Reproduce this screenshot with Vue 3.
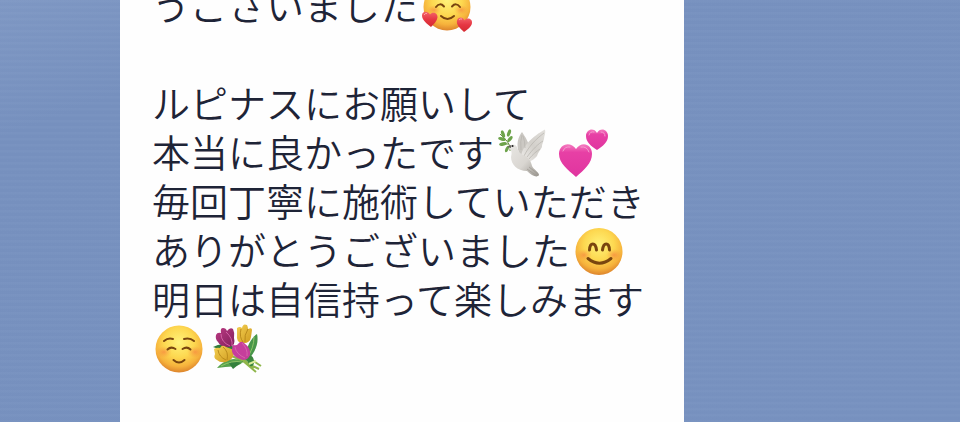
<template>
  <main class="chat">
    <!-- Shared emoji colours -->
    <svg class="emoji-defs" aria-hidden="true">
      <defs>
        <radialGradient id="face" cx="50%" cy="36%" r="64%">
          <stop offset="0" stop-color="#fff27a" />
          <stop offset="0.5" stop-color="#fdd850" />
          <stop offset="0.8" stop-color="#f6b23c" />
          <stop offset="1" stop-color="#dd842c" />
        </radialGradient>
        <radialGradient id="cheek">
          <stop offset="0" stop-color="#f4683b" stop-opacity="0.5" />
          <stop offset="1" stop-color="#f4883b" stop-opacity="0" />
        </radialGradient>
        <linearGradient id="red" x1="0" y1="0" x2="0" y2="1">
          <stop offset="0" stop-color="#f4646a" />
          <stop offset="0.5" stop-color="#e63743" />
          <stop offset="1" stop-color="#d52a31" />
        </linearGradient>
        <linearGradient id="pink" x1="0" y1="0" x2="0" y2="1">
          <stop offset="0" stop-color="#f57cc0" />
          <stop offset="0.25" stop-color="#e740a5" />
          <stop offset="1" stop-color="#e0349f" />
        </linearGradient>
        <linearGradient id="feather" x1="0" y1="1" x2="1" y2="0">
          <stop offset="0" stop-color="#f0eeeb" />
          <stop offset="0.5" stop-color="#d3d0cb" />
          <stop offset="1" stop-color="#e2e0dc" />
        </linearGradient>
        <linearGradient id="body" x1="0" y1="0" x2="1" y2="1">
          <stop offset="0" stop-color="#e9e7e4" />
          <stop offset="0.55" stop-color="#d9d6d1" />
          <stop offset="1" stop-color="#98948d" />
        </linearGradient>
        <linearGradient id="plum" x1="0" y1="0" x2="1" y2="1">
          <stop offset="0" stop-color="#bb3a83" />
          <stop offset="1" stop-color="#81205b" />
        </linearGradient>
        <linearGradient id="gold" x1="0" y1="0" x2="1" y2="1">
          <stop offset="0" stop-color="#f4d052" />
          <stop offset="1" stop-color="#cf9a1e" />
        </linearGradient>
      </defs>
    </svg>

    <article class="bubble">
      <p v-for="(line, i) in lines" :key="i" class="line">
        <template v-for="(part, j) in line" :key="j">
          <span v-if="part.text" class="text">{{ part.text }}</span>
          <svg v-else class="emoji" viewBox="0 0 57 49" role="img" :aria-label="part.emoji">
            <!-- smiling face with hearts -->
            <g v-if="part.emoji === 'hearts-face'">
              <circle cx="29" cy="25" r="23.5" fill="url(#face)" />
              <ellipse cx="16" cy="28" rx="7" ry="5" fill="url(#cheek)" />
              <ellipse cx="43" cy="28" rx="7" ry="5" fill="url(#cheek)" />
              <g class="ink">
                <path d="M18 25Q22 20 26 24.500M34 24.500Q38 20 42 25" />
                <path d="M23 34Q29.500 40 36 34" />
              </g>
              <g fill="url(#red)">
                <path d="M13 45C9 42 4 38 4 33.500C4 29 9.500 28.500 12 32.500C14.500 29 20 31 19.500 35.500C19 39 16 42 13 45Z" />
                <path d="M46 50C42 46 38 43 39 38.500C40 34.500 45 34.500 46.500 38.500C49 35 54.500 36.500 54 41C53.500 45 49 48 46 50Z" />
              </g>
              <path d="M6 33Q7 31 9 31.500M41 38Q42 36.500 44 37" stroke="#ffa5a4" stroke-width="1" fill="none" />
            </g>

            <!-- dove with olive branch -->
            <g v-else-if="part.emoji === 'dove'">
              <path d="M16 22Q17 15 10 9Q8 7 6 5M15 15L8 15" stroke="#6c9147" stroke-width="1" fill="none" />
              <g fill="#6da34b">
                <ellipse cx="15" cy="4" rx="1.700" ry="3.800" transform="rotate(20 15 4)" />
                <ellipse cx="9" cy="5" rx="1.700" ry="3.800" transform="rotate(-20 9 5)" />
                <ellipse cx="8" cy="10" rx="3.900" ry="1.700" transform="rotate(14 8 10)" />
                <ellipse cx="16" cy="10" rx="1.700" ry="3.600" transform="rotate(38 16 10)" />
                <ellipse cx="9" cy="15" rx="3.900" ry="1.700" transform="rotate(-12 9 15)" />
                <ellipse cx="13" cy="20" rx="1.500" ry="3.500" transform="rotate(25 13 20)" />
              </g>
              <path d="M25 24C22 15 24 8 28 3C31 8 35 12 36 22L30 31Z" fill="#cbc8c3" />
              <path d="M27 29C27 18 39 7 51 .500C52 4 50 7 50 10C49 14 48 15 48 18C46 22 44 23 43 27C40 31 37 31 35 34Z" fill="url(#feather)" />
              <path d="M30 27C35 17 42 10 50 4M33 28C39 20 44 15 49 12M35 30C39 25 43 22 46 20M27 21Q26 12 28 6M31 19Q31 12 29 7" stroke="#b6b3ae" stroke-width="0.700" fill="none" />
              <path d="M15 19C15 15 21 14 23 18C24 21 25 24 29 26C34 28 37 32 38 37C40 41 45 43 45 46C43 49 38 47 33 42C23 42 17 35 17 28C18 24 18 22 15 19Z" fill="url(#body)" />
              <path d="M33 40L43 47M35 38L44 45" stroke="#a09c95" stroke-width="0.800" />
              <path d="M17 16L13 18L17 19Z" fill="#66625e" />
              <circle cx="18.500" cy="17" r="1.100" fill="#222" />
            </g>

            <!-- two hearts -->
            <g v-else-if="part.emoji === 'two-hearts'">
              <path d="M25 48C17 41 8 34 8 25C8 14 20 12 25 20C30 12 41 14 41 25C41 34 33 41 25 48Z" fill="url(#pink)" />
              <path d="M46 21C40 17 35 13 35 7C35 0 43-2 46 4C49-2 57 0 57 7C57 13 52 17 46 21Z" fill="url(#pink)" />
              <path d="M12 22Q14 17 19 18M30 18Q36 17 38 23M38 6Q39 2 43 3M50 3Q54 3 54 7" stroke="#f79bd0" stroke-width="1" stroke-linecap="round" fill="none" />
            </g>

            <!-- smiling face with smiling eyes -->
            <g v-else-if="part.emoji === 'smile'">
              <circle cx="29" cy="24.500" r="23.500" fill="url(#face)" />
              <ellipse cx="14" cy="28" rx="8" ry="6" fill="url(#cheek)" />
              <ellipse cx="44" cy="28" rx="8" ry="6" fill="url(#cheek)" />
              <g class="ink thick">
                <path d="M19.500 23C20 15 25.500 15 26.500 23M32.500 23C33.500 15 39 15 39.500 23" />
                <path d="M18 31.500Q29.500 41 41 31.500" />
              </g>
            </g>

            <!-- relaxed face -->
            <g v-else-if="part.emoji === 'relaxed'">
              <circle cx="27" cy="24" r="23.500" fill="url(#face)" />
              <ellipse cx="12" cy="27" rx="8" ry="6" fill="url(#cheek)" />
              <ellipse cx="43" cy="27" rx="8" ry="6" fill="url(#cheek)" />
              <g class="ink">
                <path d="M12 16Q16 12.500 21 14M32 14Q38 12.500 42 16" />
                <path d="M15.500 24.500Q19 21 23.500 24M30.500 24Q35 21 38.500 24.500" />
                <path d="M21.500 35Q27 40 32.500 35" />
              </g>
            </g>

            <!-- bouquet -->
            <g v-else>
              <path d="M23 31L50 44M27 30L47 47M34 29L52 41M23 25L45 43" stroke="#8fb64b" stroke-width="2" fill="none" />
              <path d="M35 34C38 20 43 12 48 9C50 17 47 27 38 36Z" fill="#48964a" />
              <path d="M37 34C40 29 45 29 45 38Q44 42 41 41Z" fill="#3c863e" />
              <path d="M8 43C17 33 27 32 34 37C28 43 20 41 8 43Z" fill="#57a24c" />
              <path d="M19 37L34 36L24 44Z" fill="#34803d" />
              <path d="M4 22Q14 16 27 23L24 29Z" fill="#327c3b" />
              <path d="M45 12Q45 23 38 33M12 41Q23 35 33 37" stroke="#a2cf70" stroke-width="0.800" fill="none" />
              <path d="M7 10Q8 7 12 8Q11 3 14 3Q17 3 18 6Q21 2 24 4Q26 8 25 13Q27 20 21 22Q12 23 9 17Q6 14 7 10Z" fill="url(#plum)" />
              <path d="M28 3Q31 1 33 3Q34-2 38 0Q39 2 39 4Q43 2 43 5L42 12Q41 19 33 18Q27 17 28 10Z" fill="url(#gold)" />
              <path d="M5 24Q8 22 11 23Q13 19 17 22L25 25Q26 34 17 37Q11 38 8 35Q4 33 6 29Z" fill="url(#gold)" />
              <path d="M24 20Q28 21 29 19Q32 15 35 18Q42 23 41 30Q38 37 31 34Q20 30 24 20Z" fill="#c63e9c" />
              <path d="M12 9Q12 17 21 21M17 7Q24 13 23 21M26 22Q27 29 36 33M33 18Q39 24 38 31" stroke="#d867ac" stroke-width="0.900" fill="none" />
              <path d="M32 4Q30 12 34 17M39 4Q35 10 36 17M9 25Q10 32 17 35M14 22Q20 27 18 35" stroke="#b58618" stroke-width="0.900" fill="none" />
              <path d="M40 39L47 36" stroke="#dced9b" stroke-width="2" />
            </g>
          </svg>
        </template>
      </p>
    </article>
  </main>
</template>

<script setup>
const lines = [
  [{ text: 'うございました' }, { emoji: 'hearts-face' }],
  [],
  [{ text: 'ルピナスにお願いして' }],
  [{ text: '本当に良かったです' }, { emoji: 'dove' }, { emoji: 'two-hearts' }],
  [{ text: '毎回丁寧に施術していただき' }],
  [{ text: 'ありがとうございました' }, { emoji: 'smile' }],
  [{ text: '明日は自信持って楽しみます' }],
  [{ emoji: 'relaxed' }, { emoji: 'bouquet' }]
]
</script>

<style>
body {
  margin: 0;
}
</style>

<style scoped>
.chat {
  display: flex;
  align-items: flex-end;
  height: 100vh;
  padding-left: 12.5%;
  box-sizing: border-box;
  overflow: hidden;
  background:
    repeating-linear-gradient(180deg, rgba(255, 255, 255, 0.015) 0 2px, rgba(60, 80, 130, 0.015) 3px 6px),
    linear-gradient(160deg, #7f98c4 0, #7791bf 18%, #7892c0 100%);
}

.emoji-defs {
  position: absolute;
  width: 0;
  height: 0;
}

.bubble {
  width: 67.2%;
  box-sizing: border-box;
  padding: 0 32px 48px;
  background: #fefefe;
  color: #1e2437;
  font-family: "Noto Sans CJK JP", sans-serif;
  font-size: 38px;
  font-weight: 350;
  line-height: 43px;
}

.line {
  display: flex;
  align-items: center;
  height: 49px;
  margin: 0;
  white-space: nowrap;
}

.text {
  padding-bottom: 6px;
}

.emoji {
  flex: none;
  width: 57px;
  height: 49px;
  overflow: visible;
}

.ink {
  fill: none;
  stroke: #79450f;
  stroke-width: 2;
  stroke-linecap: round;
}

.ink.thick {
  stroke-width: 3;
}
</style>
